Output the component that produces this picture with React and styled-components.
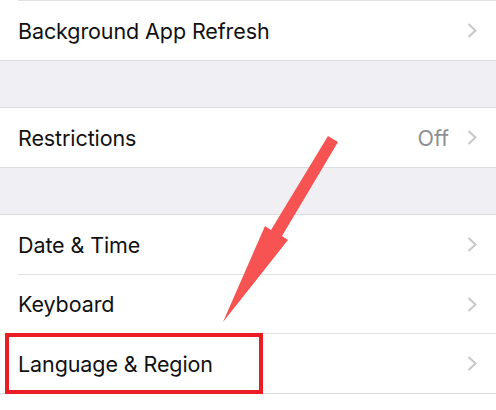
import React from 'react'
import styled, { createGlobalStyle } from 'styled-components'

const GlobalStyle = createGlobalStyle`
body {
    margin: 0;
    background: #fff;
    font-family: 'Inter', 'Roboto', sans-serif;
    -webkit-font-smoothing: antialiased;
}
`

const Screen = styled.div`
position: relative;
width: 496px;
height: 410px;
overflow: hidden;
background: #fff;
`

const Group = styled.div`
background: #fff;
border-top: ${props => props.inset ? 'none' : '1px solid #dcdce0'};
border-bottom: 1px solid #dcdce0;
`

const Gap = styled.div`
height: 46px;
background: #efeff4;
`

const Row = styled.div`
position: relative;
box-sizing: border-box;
height: ${props => props.h || 59}px;
display: flex;
align-items: center;
padding: 0 19px 0 ${props => props.divider ? '0' : '18px'};
margin-left: ${props => props.divider ? '18px' : '0'};
border-top: ${props => props.divider ? '1px solid #e2e2e6' : 'none'};
`

const TopRule = styled.div`
height: 1px;
margin-left: 18px;
background: #e2e2e6;
`

const Label = styled.span`
flex: 1;
font-size: 21.5px;
color: #111;
letter-spacing: -0.1px;
`

const Detail = styled.span`
font-size: 21.5px;
color: #8e8e93;
margin-right: 18px;
`

const Highlight = styled.div`
position: absolute;
left: -13px;
top: -1px;
width: 258px;
height: 61px;
border: 4px solid #ec1c24;
box-sizing: border-box;
`

const Overlay = styled.svg`
position: absolute;
left: 0;
top: 0;
pointer-events: none;
`

const Chevron = () => (
    <svg width="10" height="15" viewBox="0 0 10 15">
        <polyline points="1.5,1 8.5,7.5 1.5,14" fill="none" stroke="#c7c7cc" strokeWidth="2" />
    </svg>
)

const App = () => {
    return (
        <Screen>
            <GlobalStyle />
            <TopRule />
            <Group inset>
                <Row>
                    <Label>Background App Refresh</Label>
                    <Chevron />
                </Row>
            </Group>
            <Gap />
            <Group>
                <Row>
                    <Label>Restrictions</Label>
                    <Detail>Off</Detail>
                    <Chevron />
                </Row>
            </Group>
            <Gap />
            <Group>
                <Row>
                    <Label>Date &amp; Time</Label>
                    <Chevron />
                </Row>
                <Row divider>
                    <Label>Keyboard</Label>
                    <Chevron />
                </Row>
                <Row divider h={60}>
                    <Highlight />
                    <Label>Language &amp; Region</Label>
                    <Chevron />
                </Row>
            </Group>
            <Overlay width="496" height="410">
                <polygon
                    points="328,136 338,142 282,236 288,240 223,322 265,226 271,230"
                    fill="#f65352"
                />
            </Overlay>
        </Screen>
    )
}

export default App
